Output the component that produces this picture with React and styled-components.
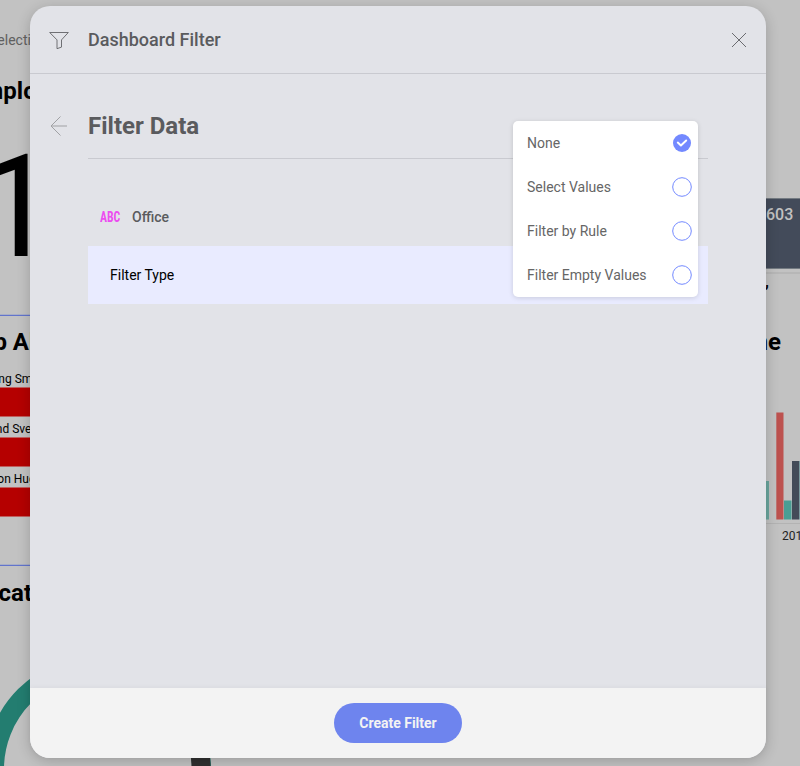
import React from "react";
import styled, { createGlobalStyle } from "styled-components";

const GlobalStyle = createGlobalStyle`
  * { box-sizing: border-box; }
  body { margin: 0; overflow: hidden; background: #c2c2c2; font-family: Roboto, sans-serif; }
`;

const Screen = styled.main`
  position: relative;
  width: 800px;
  height: 766px;
  overflow: hidden;
  background: #c2c2c2;
`;

const Dashboard = styled.div`
  display: grid;
  grid-template-columns: 700px 100px;
  height: 766px;
  color: #000;
`;

const Column = styled.div`
  display: flex;
  flex-direction: column;
  min-width: 0;
  overflow: hidden;
`;

const Widget = styled.section`
  display: flex;
  flex-direction: column;
  flex: none;
  height: ${(p) => p.$height}px;
`;

const LinedWidget = styled(Widget)`
  border-bottom: 1px solid #6274cc;
  box-shadow: inset 0 -1px 0 #a9afc6;
`;

const Hint = styled.div`
  height: 76px;
  margin-left: -11px;
  padding-top: 30px;
  font-size: 14px;
  line-height: 20px;
  color: #606060;
`;

const WidgetTitle = styled.h3`
  margin: 0 0 0 ${(p) => p.$shift}px;
  padding-top: ${(p) => p.$top}px;
  font-size: 24px;
  font-weight: 700;
  line-height: 28px;
  white-space: nowrap;
`;

const BigNumber = styled.div`
  margin: 20px 0 0 -23px;
  font-size: 142px;
  line-height: 166px;
`;

const BarList = styled.div`
  margin-top: 15px;
`;

const BarRow = styled.div`
  height: 50px;
`;

const BarLabel = styled.div`
  height: 16px;
  margin-left: ${(p) => p.$shift}px;
  font-size: 12px;
  line-height: 16px;
  white-space: nowrap;
`;

const Bar = styled.div`
  height: 30px;
  background: #b50000;
  border: solid #c0605f;
  border-width: 1px 0;
`;

const Donut = styled.svg`
  display: block;
  flex: none;
`;

const Tile = styled.div`
  flex: none;
  height: 71px;
  margin-top: 198px;
  padding: 6px 0 0 66px;
  border: solid #747b82;
  border-width: 1px 0;
  background: #434b5a;
  color: #c2c2c2;
  font-size: 16px;
  font-weight: 500;
  line-height: 20px;
`;

const TileBase = styled.div`
  flex: none;
  height: 58px;
  margin-top: 3px;
  padding: 0 0 0 65px;
  border-top: 2px solid #b7b7b7;
  font-size: 16px;
  font-weight: 700;
  line-height: 15px;
`;

const SeriesTitle = styled(WidgetTitle)`
  padding: 0 19px 0 0;
  margin: -2px 0 0;
  text-align: right;
`;

const Dialog = styled.div`
  position: absolute;
  left: 30px;
  top: 6px;
  display: flex;
  flex-direction: column;
  width: 736px;
  height: 752px;
  border-radius: 20px;
  background: #e2e3e8;
  box-shadow: 0 3px 14px rgba(0, 0, 0, 0.2);
`;

const DialogHeader = styled.header`
  display: flex;
  align-items: center;
  flex: none;
  height: 68px;
  padding: 0 19px;
  border-bottom: 1px solid #c9cad0;
`;

const DialogTitle = styled.h1`
  flex: 1;
  margin: 0 0 0 19px;
  color: #5a5b5e;
  font-size: 18px;
  font-weight: 500;
  line-height: 24px;
`;

const IconButton = styled.button`
  display: flex;
  padding: 0;
  border: 0;
  background: transparent;
`;

const DialogBody = styled.div`
  display: flex;
  flex: 1;
  padding: 32px 58px 0 20px;
`;

const BackButton = styled(IconButton)`
  width: 38px;
  height: 20px;
  margin-top: 10px;
`;

const Content = styled.div`
  flex: 1;
`;

const Heading = styled.h2`
  height: 53px;
  margin: 0;
  border-bottom: 1px solid #c9cad0;
  color: #5a5b5e;
  font-size: 24px;
  font-weight: 700;
  line-height: 40px;
`;

const Field = styled.div`
  display: flex;
  align-items: center;
  gap: 12px;
  height: 87px;
  padding: 28px 0 0 12px;
  color: #5a5b5e;
  font-size: 14px;
  font-weight: 500;
`;

const TypeTag = styled.span`
  width: 20px;
  color: #ec4df0;
  font-family: "Roboto Condensed", Roboto, sans-serif;
  font-size: 14px;
  font-weight: 700;
`;

const TagText = styled.span`
  display: inline-block;
  transform: scaleX(0.84);
  transform-origin: left;
`;

const FilterRow = styled.div`
  display: flex;
  align-items: center;
  height: 58px;
  padding-left: 22px;
  background: #e9ebff;
  color: #000;
  font-size: 14px;
`;

const DialogFooter = styled.footer`
  display: flex;
  align-items: center;
  justify-content: center;
  flex: none;
  height: 70px;
  border-radius: 0 0 20px 20px;
  background: #f3f3f3;
  box-shadow: 0 -1px 5px rgba(0, 0, 0, 0.04);
`;

const CreateButton = styled.button`
  width: 128px;
  height: 40px;
  padding: 0;
  border: 0;
  border-radius: 20px;
  background: #6e84ee;
  color: #f3f3f3;
  font: 700 14px Roboto, sans-serif;
`;

const Menu = styled.ul`
  position: absolute;
  left: 513px;
  top: 121px;
  width: 185px;
  margin: 0;
  padding: 0;
  border-radius: 5px;
  background: #fff;
  box-shadow: 0 1px 5px rgba(0, 0, 0, 0.14);
  list-style: none;
`;

const MenuItem = styled.li`
  display: flex;
  align-items: center;
  justify-content: space-between;
  height: 44px;
  padding: 0 6px 0 14px;
  color: #666;
  font-size: 14px;
`;

const OPTIONS = ["None", "Select Values", "Filter by Rule", "Filter Empty Values"];

const PEOPLE = [
  { name: "Young Smith", shift: -22 },
  { name: "Brand Svensson", shift: -22 },
  { name: "Jason Hughes", shift: -22 },
];

function Radio({ checked }) {
  return (
    <svg width="20" height="20" viewBox="0 0 20 20" fill="none">
      {checked ? (
        <>
          <circle cx="10" cy="10" r="9" fill="#7389ff" />
          <path d="M5.8 9.6l3.100 2.800 5.300-4.900" stroke="#fff" strokeWidth="2" strokeLinecap="round" strokeLinejoin="round" />
        </>
      ) : (
        <circle cx="10" cy="10" r="9.3" stroke="#7389ff" />
      )}
    </svg>
  );
}

export default function App() {
  return (
    <Screen>
      <GlobalStyle />
      <Dashboard>
        <Column>
          <LinedWidget $height={316}>
            <Hint>Selection</Hint>
            <WidgetTitle $shift={-31} $top={1}>Employees</WidgetTitle>
            <BigNumber>1</BigNumber>
          </LinedWidget>
          <LinedWidget $height={250}>
            <WidgetTitle $shift={-33} $top={12}>Top Absence</WidgetTitle>
            <BarList>
              {PEOPLE.map((p) => (
                <BarRow key={p.name}>
                  <BarLabel $shift={p.shift}>{p.name}</BarLabel>
                  <Bar />
                </BarRow>
              ))}
            </BarList>
          </LinedWidget>
          <Widget $height={200}>
            <WidgetTitle $shift={-28} $top={13}>Location</WidgetTitle>
            <Donut width="240" height="159" viewBox="0 607 240 159">
              <circle cx="98" cy="769" r="103.5" fill="none" stroke="#237d70" strokeWidth="19" />
              <path d="M170 694a103.5 103.5 0 0 1 31 75" fill="none" stroke="#303030" strokeWidth="19" />
            </Donut>
          </Widget>
        </Column>
        <Column>
          <Tile>603</Tile>
          <TileBase>,</TileBase>
          <SeriesTitle $shift={0} $top={0}>ne</SeriesTitle>
          <svg width="100" height="200" viewBox="700 356 100 200">
            <path d="M766 481h3v38.500h-3z" fill="#6aa69e" />
            <path d="M784 500.500h7.500v19H784z" fill="#4a9e94" />
            <path d="M776.300 412.500h7.200V519.500h-7.200z" fill="#bd524f" />
            <path d="M792 461h7v58.500h-7z" fill="#434b58" />
            <path d="M799 461h1v58.500h-1z" fill="#79999d" />
            <path d="M766 523.500h34" stroke="#b3b3b3" />
            <text x="782" y="540" fill="#222" fontSize="12">2016</text>
          </svg>
        </Column>
      </Dashboard>
      <Dialog>
        <DialogHeader>
          <svg width="20" height="20" viewBox="0 0 20 20" fill="none" stroke="#626367" strokeWidth=".9">
            <path d="M.7 2.500h18.600l-6.800 7.400v7.200L8 18.700V9.900z" strokeLinejoin="round" />
          </svg>
          <DialogTitle>Dashboard Filter</DialogTitle>
          <IconButton aria-label="Close">
            <svg width="16" height="16" viewBox="0 0 16 16" fill="none" stroke="#5c5d61" strokeWidth=".9">
              <path d="M1 1l14 14M15 1L1 15" />
            </svg>
          </IconButton>
        </DialogHeader>
        <DialogBody>
          <BackButton aria-label="Back">
            <svg width="17" height="20" viewBox="0 0 17 20" fill="none" stroke="#a0a1a4">
              <path d="M10.500.5L1 10l9.500 9.500M1 10h16" />
            </svg>
          </BackButton>
          <Content>
            <Heading>Filter Data</Heading>
            <Field>
              <TypeTag><TagText>ABC</TagText></TypeTag>
              Office
            </Field>
            <FilterRow>Filter Type</FilterRow>
          </Content>
        </DialogBody>
        <DialogFooter>
          <CreateButton>Create Filter</CreateButton>
        </DialogFooter>
      </Dialog>
      <Menu>
        {OPTIONS.map((label, i) => (
          <MenuItem key={label}>
            {label}
            <Radio checked={i === 0} />
          </MenuItem>
        ))}
      </Menu>
    </Screen>
  );
}
